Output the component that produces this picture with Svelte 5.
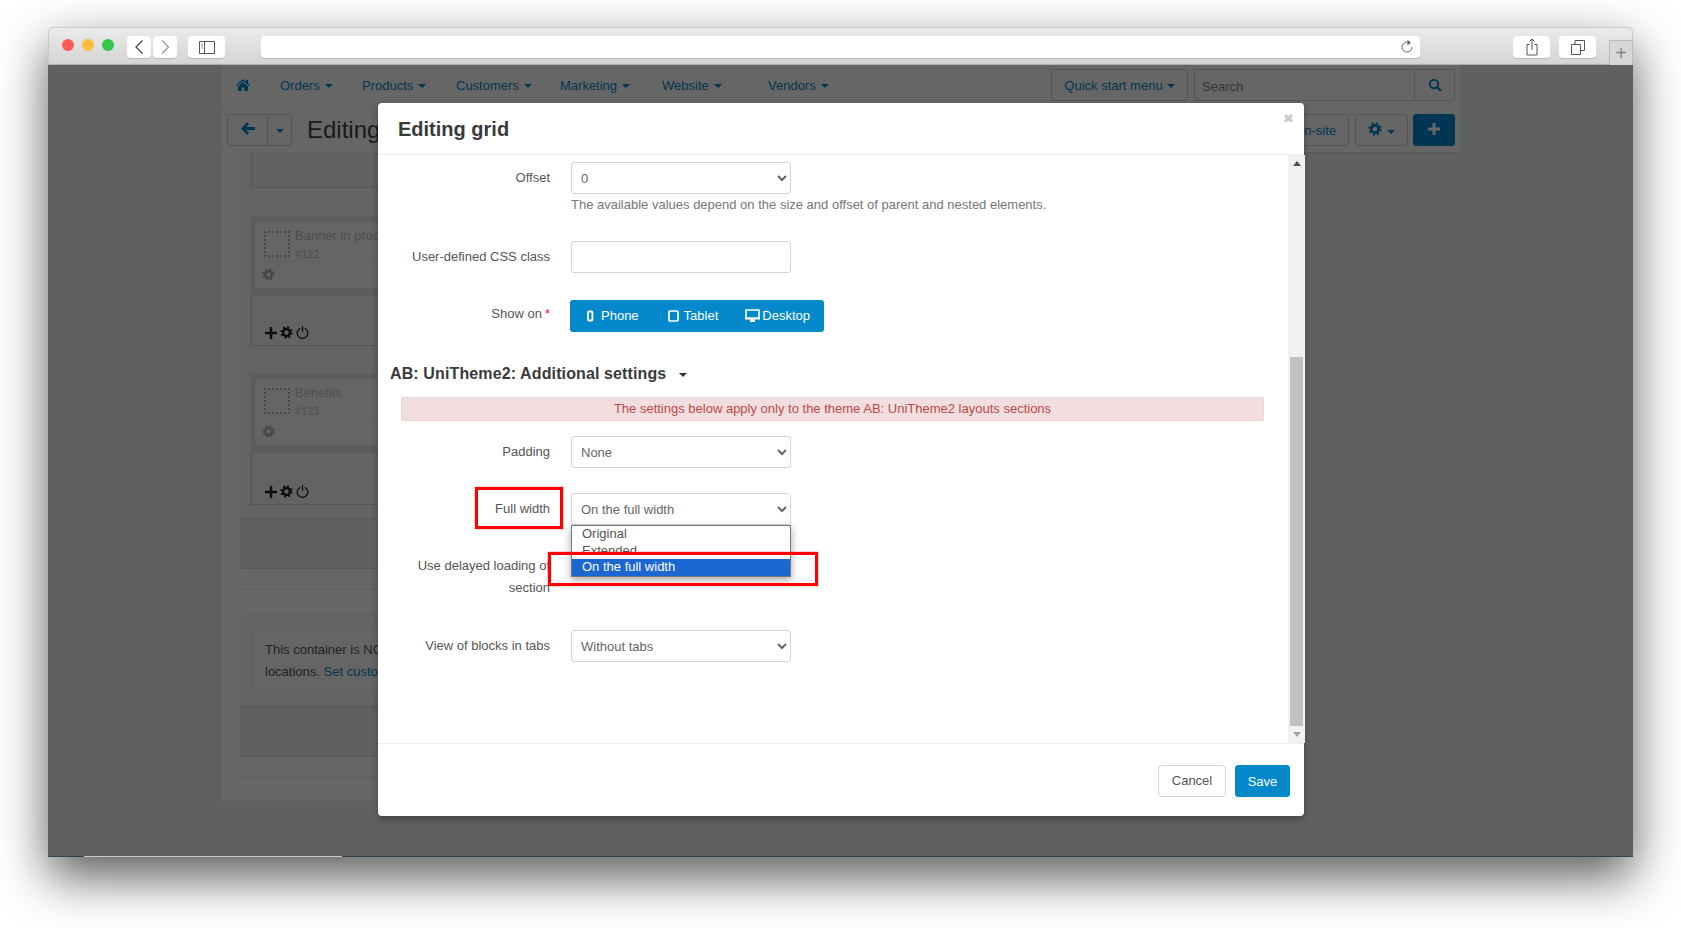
<script>
  const menu = [
    { name: 'Orders', width: 82 },
    { name: 'Products', width: 94 },
    { name: 'Customers', width: 104 },
    { name: 'Marketing', width: 102 },
    { name: 'Website', width: 106 },
    { name: 'Vendors', width: 90 },
  ];
  const blocks = [
    { title: 'Banner in products', id: '#122' },
    { title: 'Benefits', id: '#123' },
  ];
  const options = ['Original', 'Extended', 'On the full width'];
</script>

{#snippet gear(size)}
  <svg class="gear" width={size} height={size} viewBox="0 0 16 16">
    <circle cx="8" cy="8" r="4.2" fill="none" stroke="currentColor" stroke-width="3" />
    <circle cx="8" cy="8" r="6.3" fill="none" stroke="currentColor" stroke-width="2.6" stroke-dasharray="2.47 2.48" />
  </svg>
{/snippet}

{#snippet caret()}
  <span class="caret"></span>
{/snippet}

<div class="window">
  <header class="chrome">
    <div class="lights">
      <span class="red"></span>
      <span class="yellow"></span>
      <span class="green"></span>
    </div>
    <div class="nav-btns">
      <button class="tb" aria-label="back">
        <svg width="12" height="16" viewBox="0 0 12 16"><path d="M9.5 1.5 3 8l6.500 6.500" fill="none" stroke="#444" stroke-width="1.300" /></svg>
      </button>
      <button class="tb" aria-label="forward">
        <svg width="12" height="16" viewBox="0 0 12 16"><path d="M3 1.500 9.500 8 3 14.500" fill="none" stroke="#999" stroke-width="1.300" /></svg>
      </button>
    </div>
    <button class="tb side" aria-label="sidebar">
      <svg width="16" height="13" viewBox="0 0 16 13"><path d="M.5.500h15v12H.5zM5.500.500v12" fill="none" stroke="#555" /><path d="M2 3h2M2 5h2M2 7h2" stroke="#999" /></svg>
    </button>
    <div class="url">
      <svg width="14" height="16" viewBox="0 0 14 16"><path d="M9.500 3.800A5 5 0 1 0 12 8" fill="none" stroke="#666" stroke-width="1" /><path d="M7.500 .8l3.500 3-3.500 2.600z" fill="#666" /></svg>
    </div>
    <button class="tb share" aria-label="share">
      <svg width="14" height="18" viewBox="0 0 14 18"><path d="M4.500 6.500H2v10.500h10V6.500H9.500M7 12V1M4.500 3.500 7 1l2.500 2.500" fill="none" stroke="#555" /></svg>
    </button>
    <button class="tb tabs" aria-label="tabs">
      <svg width="14" height="15" viewBox="0 0 14 15"><path d="M.5 4.500h9v10h-9zM4 4.500V.5h9.500v10h-4" fill="none" stroke="#555" /></svg>
    </button>
    <div class="newtab">+</div>
  </header>

  <div class="screen">
    <div class="app">
      <div class="head">
        <div class="navbar">
          <nav class="menu">
            <svg class="home" width="14" height="12" viewBox="0 0 14 12"><path d="M7 0 0 6l.8.900L7 1.700l6.200 5.200.8-.9-2-1.700V1H9.700v1.700zM2 7.300V12h3.700V8.500h2.600V12H12V7.300L7 3.200z" fill="currentColor" /></svg>
            {#each menu as item}
              <span class="menu-item" style="width: {item.width}px">{item.name}{@render caret()}</span>
            {/each}
          </nav>
          <button class="btn quick">Quick start menu{@render caret()}</button>
          <div class="search">
            <span>Search</span>
            <i>
              <svg width="14" height="14" viewBox="0 0 14 14"><circle cx="6" cy="6" r="4.200" fill="none" stroke="currentColor" stroke-width="2" /><path d="m9 9 4 4" stroke="currentColor" stroke-width="2.400" /></svg>
            </i>
          </div>
        </div>
        <div class="toolbar">
          <div class="btn-pair">
            <button class="btn back" aria-label="back">
              <svg width="14" height="13" viewBox="0 0 14 13"><path d="M7 1 2 6.500 7 12M2.500 6.500H14" fill="none" stroke="currentColor" stroke-width="2.800" /></svg>
            </button>
            <button class="btn drop" aria-label="more">{@render caret()}</button>
          </div>
          <h1>Editing</h1>
          <button class="btn preview">on-site</button>
          <button class="btn cog" aria-label="settings">{@render gear(14)}{@render caret()}</button>
          <button class="btn plus" aria-label="add">
            <svg width="12" height="12" viewBox="0 0 12 12"><path d="M6 0v12M0 6h12" stroke="#fff" stroke-width="3" /></svg>
          </button>
        </div>
      </div>

      <main class="panel">
        <div class="grid">
          <div class="box first"></div>
          {#each blocks as block}
            <div class="zone">
              <div class="card">
                <div class="card-top">
                  <span class="dashed"></span>
                  <div>
                    <div class="card-title">{block.title}</div>
                    <div class="card-id">{block.id}</div>
                  </div>
                </div>
                <div class="card-foot">{@render gear(13)}</div>
              </div>
            </div>
            <div class="box tools">
              <svg width="12" height="12" viewBox="0 0 12 12"><path d="M6 0v12M0 6h12" stroke="currentColor" stroke-width="2.500" /></svg>
              {@render gear(13)}
              <svg width="13" height="13" viewBox="0 0 13 13"><path d="M8.800 2.300a5.300 5.300 0 1 1-4.600 0M6.500 0v6" fill="none" stroke="currentColor" stroke-width="1.300" /></svg>
            </div>
          {/each}
          <div class="wide"></div>
        </div>
        <hr />
        <div class="notice-wrap">
          <p class="notice">This container is NOT<br />locations. <a href="#top">Set custom</a></p>
        </div>
        <div class="wide last"></div>
        <hr />
      </main>
    </div>

    <div class="overlay"></div>

    <section class="modal">
      <div class="modal-head">
        <h2>Editing grid</h2>
        <span class="close">✖</span>
      </div>
      <div class="modal-main">
        <div class="form">
          <div class="row offset">
            <span class="label">Offset</span>
            <div>
              <select><option>0</option></select>
              <p class="help">The available values depend on the size and offset of parent and nested elements.</p>
            </div>
          </div>
          <div class="row css">
            <span class="label">User-defined CSS class</span>
            <input type="text" />
          </div>
          <div class="row show">
            <span class="label">Show on<b>*</b></span>
            <div class="devices">
              <span class="device phone">
                <svg width="8" height="12" viewBox="0 0 8 12"><rect x="2" y="1.500" width="4.400" height="9" rx=".8" fill="none" stroke="#fff" stroke-width="1.800" /></svg>
                Phone
              </span>
              <span class="device tablet">
                <svg width="11" height="12" viewBox="0 0 11 12"><rect x="1" y="1" width="9" height="10" rx="1" fill="none" stroke="#fff" stroke-width="1.700" /></svg>
                Tablet
              </span>
              <span class="device desktop">
                <svg width="15" height="13" viewBox="0 0 15 13"><path d="M1 1h13v8H1z" fill="none" stroke="#fff" stroke-width="1.600" /><path d="M0 9h15v1.500H0zM5 10.500h5V13H5z" fill="#fff" /></svg>
                Desktop
              </span>
            </div>
          </div>
          <h3>AB: UniTheme2: Additional settings<span class="caret dark"></span></h3>
          <div class="alert">The settings below apply only to the theme AB: UniTheme2 layouts sections</div>
          <div class="row padding">
            <span class="label">Padding</span>
            <select><option>None</option></select>
          </div>
          <div class="row full">
            <span class="label">Full width</span>
            <div class="select-wrap">
              <select><option>On the full width</option></select>
              <ul class="dropdown">
                {#each options as opt, i}
                  <li class:active={i === 2}>{opt}</li>
                {/each}
              </ul>
            </div>
          </div>
          <div class="row delayed">
            <span class="label">Use delayed loading of section</span>
          </div>
          <div class="row tabs-view">
            <span class="label">View of blocks in tabs</span>
            <select><option>Without tabs</option></select>
          </div>
        </div>
        <div class="scrollbar">
          <span class="arrow up"></span>
          <div class="track"><div class="thumb"></div></div>
          <span class="arrow down"></span>
        </div>
      </div>
      <div class="modal-foot">
        <button class="cancel">Cancel</button>
        <button class="save">Save</button>
      </div>
      <span class="mark mark-label"></span>
      <span class="mark mark-option"></span>
    </section>

    <div class="strip"><span></span><span></span><span></span></div>
  </div>
</div>

<style>
  :global(body) {
    margin: 0;
    min-height: 100vh;
    background: #fff;
  }

  :global(#app) {
    height: 928px;
    padding-top: 27px;
    box-sizing: border-box;
    overflow: hidden;
  }

  * {
    box-sizing: border-box;
  }

  .window {
    width: 1585px;
    height: 830px;
    margin-left: 48px;
    border-radius: 5px 5px 0 0;
    box-shadow: 0 20px 50px rgba(0, 0, 0, 0.65);
    font-family: "Liberation Sans", Arial, sans-serif;
    font-size: 13px;
    color: #555;
  }

  .chrome {
    height: 38px;
    display: flex;
    align-items: flex-start;
    padding-top: 8px;
    position: relative;
    border: 1px solid #c9c9c9;
    border-bottom-color: #aeaeae;
    border-radius: 5px 5px 0 0;
    background: linear-gradient(#ebebeb, #d4d4d4);
  }

  .lights {
    display: flex;
    gap: 8px;
    margin: 3px 0 0 13px;
  }

  .lights span {
    width: 12px;
    height: 12px;
    border-radius: 50%;
  }

  .red { background: #fc5b57; }
  .yellow { background: #fdbc40; }
  .green { background: #33c748; }

  .tb {
    height: 22px;
    padding: 0;
    display: flex;
    align-items: center;
    justify-content: center;
    border: 0;
    border-radius: 4px;
    background: #fff;
    box-shadow: 0 1px 0 #b8b8b8;
  }

  .nav-btns {
    display: flex;
    gap: 2px;
    margin-left: 13px;
  }

  .nav-btns .tb {
    width: 24px;
  }

  .side {
    width: 37px;
    margin-left: 11px;
  }

  .url {
    width: 1159px;
    height: 22px;
    margin-left: 36px;
    padding-right: 6px;
    display: flex;
    align-items: center;
    justify-content: flex-end;
    border-radius: 4px;
    background: #fff;
    box-shadow: 0 1px 0 #b8b8b8;
  }

  .share {
    width: 37px;
    margin-left: 93px;
  }

  .tabs {
    width: 37px;
    margin-left: 9px;
  }

  .newtab {
    position: absolute;
    right: -1px;
    bottom: -1px;
    width: 24px;
    height: 25px;
    border: 1px solid #bbb;
    border-bottom: 0;
    background: #d8d8d8;
    color: #888;
    font-size: 20px;
    font-weight: 300;
    line-height: 24px;
    text-align: center;
  }

  .screen {
    position: relative;
    height: 792px;
    overflow: hidden;
    padding-left: 173px;
    background: #eef0f1;
  }

  .app {
    width: 1240px;
  }

  .head {
    border-radius: 0 0 4px 4px;
    background: #fff;
    box-shadow: 0 1px 2px rgba(0, 0, 0, 0.12);
  }

  .navbar {
    height: 43px;
    display: flex;
    align-items: center;
    padding: 0 6px 2px 0;
    border-bottom: 1px solid #f1f1f1;
  }

  .menu {
    flex: 1;
    display: flex;
    align-items: center;
    padding-left: 15px;
    color: #0388cc;
  }

  .home {
    margin-right: 30px;
  }

  .menu-item {
    flex: none;
  }

  .caret {
    display: inline-block;
    margin-left: 5px;
    vertical-align: 2px;
    border-top: 4px solid currentColor;
    border-left: 4px solid transparent;
    border-right: 4px solid transparent;
  }

  .caret.dark {
    margin-left: 13px;
    color: #333;
    vertical-align: 2px;
  }

  .btn {
    height: 32px;
    padding: 0;
    border: 1px solid #ccd6dd;
    border-radius: 3px;
    background: #fff;
    color: #0388cc;
    font: inherit;
  }

  .quick {
    width: 137px;
    margin-right: 6px;
  }

  .quick .caret {
    margin-left: 4px;
  }

  .search {
    width: 261px;
    height: 32px;
    display: flex;
    align-items: center;
    justify-content: space-between;
    padding-left: 7px;
    border: 1px solid #ccd6dd;
    border-radius: 3px;
    color: #888;
  }

  .search span {
    padding-top: 2px;
  }

  .search i {
    width: 40px;
    height: 100%;
    display: flex;
    align-items: center;
    justify-content: center;
    border-left: 1px solid #ccd6dd;
    color: #0388cc;
  }

  .toolbar {
    height: 44px;
    display: flex;
    align-items: center;
    padding: 0 6px;
  }

  .btn-pair {
    display: flex;
    margin-right: 15px;
  }

  .back {
    width: 41px;
    border-radius: 3px 0 0 3px;
  }

  .drop {
    width: 25px;
    margin-left: -1px;
    border-radius: 0 3px 3px 0;
  }

  .drop .caret {
    margin: 0;
  }

  .toolbar h1 {
    flex: 1;
    margin: 0;
    color: #444;
    font-size: 24px;
    font-weight: 400;
  }

  .preview {
    width: 120px;
    padding-right: 12px;
    text-align: right;
  }

  .cog {
    width: 53px;
    margin-left: 6px;
  }

  .plus {
    width: 42px;
    margin-left: 5px;
    border-color: #0388cc;
    background: #0388cc;
  }

  .panel {
    width: 880px;
    height: 649px;
    padding: 0 20px;
    border-radius: 0 0 4px 4px;
    background: #fff;
    color: #333;
  }

  .grid {
    height: 417px;
    padding-left: 10px;
    background: #f7f7f7;
  }

  .box {
    border: 1px solid #d4d4d4;
    border-top: 0;
    background: #f8f8f8;
  }

  .first {
    height: 36px;
    margin-bottom: 29px;
    background: #f3f3f3;
  }

  .zone {
    height: 79px;
    padding: 5px 0 0 4px;
    background: #e6e6e6;
  }

  .card {
    height: 66px;
    border-radius: 3px;
    background: #fcfcfc;
  }

  .card-top {
    height: 40px;
    display: flex;
    gap: 5px;
    padding: 9px 0 0 9px;
    border-bottom: 1px solid #f2f2f2;
    color: #c4c4c4;
  }

  .dashed {
    width: 26px;
    height: 26px;
    border: 2px dotted #b5b5b5;
  }

  .card-title {
    margin-top: -4px;
    font-size: 13px;
    line-height: 18px;
  }

  .card-id {
    font-size: 11px;
    line-height: 18px;
  }

  .card-foot {
    padding: 6px 0 0 7px;
    color: #b5b5b5;
  }

  .tools {
    height: 50px;
    display: flex;
    align-items: flex-end;
    gap: 3px;
    padding: 0 0 6px 13px;
    margin-bottom: 28px;
    color: #222;
  }

  .tools + .zone + .tools {
    height: 52px;
    margin-bottom: 13px;
  }

  .wide {
    height: 51px;
    margin-left: -10px;
    border: 1px solid #dcdcdc;
    background: #f0f0f0;
  }

  hr {
    height: 1px;
    margin: 20px 0 23px;
    border: 0;
    background: #e6e6e6;
  }

  .notice-wrap {
    height: 93px;
    padding: 14px 0 16px 14px;
    background: #f8f8f8;
  }

  .notice {
    height: 63px;
    margin: 0;
    padding: 12px 0 0 10px;
    background: #fdfdfd;
    color: #555;
    font-size: 13px;
    line-height: 22px;
  }

  .notice a {
    color: #0388cc;
    text-decoration: none;
  }

  .last {
    margin: 0;
  }

  .overlay {
    position: absolute;
    inset: 0;
    background: rgba(0, 0, 0, 0.6);
  }

  .modal {
    position: absolute;
    left: 330px;
    top: 38px;
    width: 926px;
    height: 713px;
    display: flex;
    flex-direction: column;
    border-radius: 4px;
    background: #fff;
    box-shadow: 0 3px 7px rgba(0, 0, 0, 0.3);
    color: #555;
  }

  .modal-head {
    height: 52px;
    flex: none;
    display: flex;
    align-items: center;
    justify-content: space-between;
    padding: 2px 10px 0 20px;
    border-bottom: 1px solid #eee;
  }

  .modal-head h2 {
    margin: 0;
    color: #3a3a3a;
    font-size: 20px;
  }

  .close {
    align-self: flex-start;
    margin-top: 5px;
    color: #c8c8c8;
    font-family: "DejaVu Sans", sans-serif;
    font-size: 13px;
    line-height: 18px;
  }

  .modal-main {
    flex: 1;
    display: flex;
    min-height: 0;
  }

  .form {
    flex: 1;
    padding: 7px 24px 0 12px;
  }

  .row {
    display: grid;
    grid-template-columns: 160px 220px;
    column-gap: 21px;
    align-items: start;
  }

  .label {
    padding-top: 5px;
    line-height: 22px;
    text-align: right;
    color: #555;
  }

  .label b {
    margin-left: 3px;
    color: #ec1c2e;
    font-weight: 400;
  }

  select,
  input {
    display: block;
    width: 220px;
    height: 32px;
    padding: 0 5px;
    border: 1px solid #ccd6dd;
    border-radius: 3px;
    background: #fff;
    color: #666;
    font: inherit;
  }

  .help {
    width: 600px;
    margin: 2px 0 0;
    color: #777;
    line-height: 18px;
  }

  .offset { height: 79px; }
  .css { height: 59px; }
  .show { height: 61px; }

  .show .label {
    padding-top: 3px;
  }

  .devices {
    width: 254px;
    height: 32px;
    margin-left: -1px;
    padding-bottom: 1px;
    display: flex;
    align-items: center;
    border-radius: 3px;
    background: #0388cc;
    color: #fff;
    font-weight: 400;
  }

  .device {
    display: flex;
    align-items: center;
  }

  .phone { gap: 7px; margin-left: 16px; }
  .tablet { gap: 5px; margin-left: 29px; }
  .desktop { gap: 2px; margin-left: 27px; }

  h3 {
    margin: 0 0 11px;
    padding-top: 1px;
    color: #3a3a3a;
    font-size: 16px;
    letter-spacing: 0.12px;
    line-height: 24px;
  }

  .alert {
    height: 24px;
    margin: 0 0 15px 11px;
    width: 863px;
    border: 1px solid #eed3d7;
    border-radius: 2px;
    background: #f2dede;
    color: #b94a48;
    line-height: 22px;
    text-align: center;
  }

  .padding { height: 57px; }
  .full { height: 57px; }
  .delayed { height: 80px; }

  .select-wrap {
    position: relative;
  }

  .dropdown {
    position: absolute;
    left: 0;
    top: 32px;
    width: 220px;
    height: 52px;
    margin: 0;
    padding: 0;
    list-style: none;
    overflow: hidden;
    border: 1px solid #767676;
    background: #fff;
    box-shadow: 0 3px 8px rgba(0, 0, 0, 0.35);
    color: #555;
    z-index: 2;
  }

  .dropdown li {
    height: 16.500px;
    padding-left: 10px;
    line-height: 16px;
  }

  .dropdown .active {
    background: #1a67d2;
    color: #fff;
  }

  .scrollbar {
    width: 17px;
    flex: none;
    display: flex;
    flex-direction: column;
    background: #f1f1f1;
  }

  .track {
    flex: 1;
    padding: 185px 2px 0;
  }

  .thumb {
    height: 369px;
    background: #c1c1c1;
  }

  .arrow {
    width: 0;
    margin: 6px auto;
    border-left: 4px solid transparent;
    border-right: 4px solid transparent;
  }

  .arrow.up { border-bottom: 5px solid #505050; }
  .arrow.down { border-top: 5px solid #a3a3a3; }

  .modal-foot {
    height: 73px;
    flex: none;
    display: flex;
    justify-content: flex-end;
    gap: 9px;
    padding: 21px 14px 0 0;
    border-top: 1px solid #eee;
  }

  .modal-foot button {
    height: 32px;
    padding: 0;
    border-radius: 3px;
    font: inherit;
  }

  .cancel {
    width: 68px;
    border: 1px solid #ccd6dd;
    background: #fff;
    color: #555;
  }

  .modal-foot .cancel {
    padding-bottom: 2px;
  }

  .save {
    width: 55px;
    border: 1px solid #0388cc;
    background: #0388cc;
    color: #fff;
  }

  .mark {
    position: absolute;
    border: 3px solid #f00;
    box-shadow: 0 0 1px #f00;
    z-index: 3;
  }

  .mark-label {
    left: 97px;
    top: 384px;
    width: 88px;
    height: 42px;
  }

  .mark-option {
    left: 170px;
    top: 449px;
    width: 270px;
    height: 34px;
  }

  .strip {
    position: absolute;
    left: 0;
    right: 0;
    bottom: 0;
    height: 1px;
    display: flex;
  }

  .strip span:nth-child(1) { width: 36px; background: #2c434e; }
  .strip span:nth-child(2) { width: 258px; background: #c9c9c9; }
  .strip span:nth-child(3) { flex: 1; background: #2c434e; }
</style>
